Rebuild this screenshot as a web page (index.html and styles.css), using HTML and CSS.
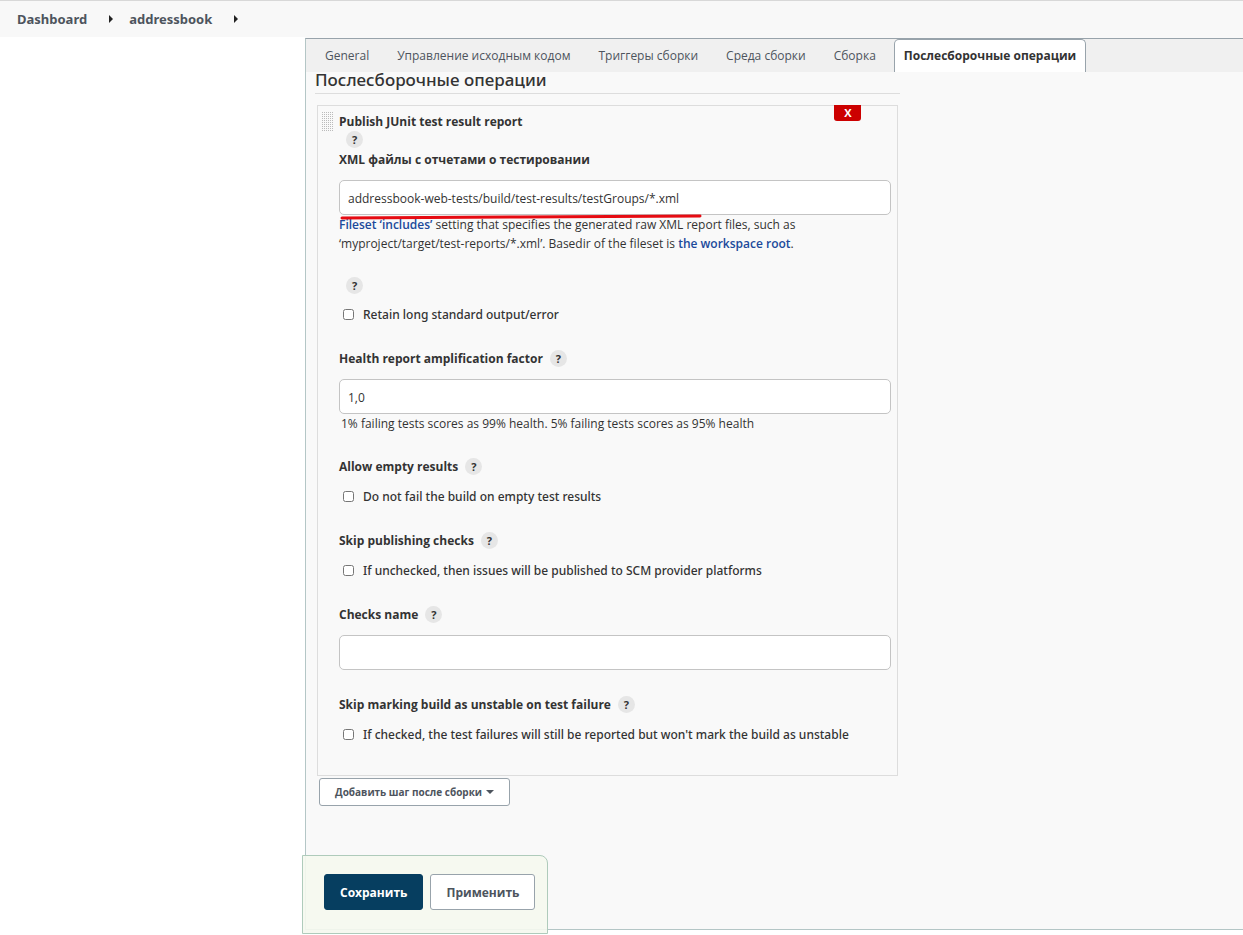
FILE: index.html
```html
<!DOCTYPE html>
<html lang="ru">
<head>
<meta charset="utf-8">
<title>addressbook</title>
<link rel="stylesheet" href="styles.css">
</head>
<body>
<nav class="breadcrumbs">
  <a href="#">Dashboard</a>
  <svg class="crumb-arrow" viewBox="0 0 4 8"><path d="M0 0L4 4L0 8Z"/></svg>
  <a href="#">addressbook</a>
  <svg class="crumb-arrow" viewBox="0 0 4 8"><path d="M0 0L4 4L0 8Z"/></svg>
</nav>
<div class="page">
  <aside class="side"></aside>
  <main class="panel">
    <nav class="tabs">
      <a class="tab" href="#">General</a>
      <a class="tab" href="#">Управление исходным кодом</a>
      <a class="tab" href="#">Триггеры сборки</a>
      <a class="tab" href="#">Среда сборки</a>
      <a class="tab" href="#">Сборка</a>
      <a class="tab active" href="#">Послесборочные операции</a>
    </nav>
    <form class="config">
      <h1 class="section-title">Послесборочные операции</h1>
      <section class="chunk">
        <button class="delete" type="button">X</button>
        <svg class="handle" viewBox="0 0 11 19"><defs><pattern id="dots" width="2" height="2" patternUnits="userSpaceOnUse"><rect width="1" height="1"/></pattern></defs><rect width="11" height="19" fill="url(#dots)"/></svg>
        <div class="fields">
          <div class="field">
            <h2 class="label">Publish JUnit test result report</h2>
            <div class="help-row"><button class="help" type="button">?</button></div>
            <label class="label" for="xml">XML файлы с отчетами о тестировании</label>
            <div class="marked">
              <input class="text" id="xml" type="text" value="addressbook-web-tests/build/test-results/testGroups/*.xml">
              <svg class="underline" viewBox="0 0 362 6"><path d="M2 4L180 3L360 2"/></svg>
            </div>
            <p class="note"><a href="#">Fileset ‘includes’</a> setting that specifies the generated raw XML report files, such as ‘myproject/target/test-reports/*.xml’. Basedir of the fileset is <a href="#">the workspace root</a>.</p>
          </div>
          <div class="field">
            <div class="help-row"><button class="help" type="button">?</button></div>
            <label class="check"><input type="checkbox">Retain long standard output/error</label>
          </div>
          <div class="field">
            <div class="label-row"><label class="label" for="health">Health report amplification factor</label><button class="help" type="button">?</button></div>
            <input class="text" id="health" type="text" value="1,0">
            <p class="note indent">1% failing tests scores as 99% health. 5% failing tests scores as 95% health</p>
          </div>
          <div class="field">
            <div class="label-row"><span class="label">Allow empty results</span><button class="help" type="button">?</button></div>
            <label class="check"><input type="checkbox">Do not fail the build on empty test results</label>
          </div>
          <div class="field">
            <div class="label-row"><span class="label">Skip publishing checks</span><button class="help" type="button">?</button></div>
            <label class="check"><input type="checkbox">If unchecked, then issues will be published to SCM provider platforms</label>
          </div>
          <div class="field">
            <div class="label-row"><label class="label" for="checks">Checks name</label><button class="help" type="button">?</button></div>
            <input class="text" id="checks" type="text">
          </div>
          <div class="field">
            <div class="label-row"><span class="label">Skip marking build as unstable on test failure</span><button class="help" type="button">?</button></div>
            <label class="check"><input type="checkbox">If checked, the test failures will still be reported but won't mark the build as unstable</label>
          </div>
        </div>
      </section>
      <button class="btn add" type="button">Добавить шаг после сборки<svg class="caret" viewBox="0 0 8 4"><path d="M0 0H8L4 4Z"/></svg></button>
    </form>
    <div class="save-bar">
      <button class="btn primary" type="button">Сохранить</button>
      <button class="btn" type="button">Применить</button>
    </div>
  </main>
</div>
</body>
</html>
```
FILE: styles.css
```css
* { box-sizing: border-box; }
body {
  margin: 0;
  background: #fff;
  color: #333;
  font: 12px/19px "Open Sans", "Noto Sans", sans-serif;
}
h1, h2, p { margin: 0; }
button, input { font: inherit; color: inherit; }
a { color: #204a9b; text-decoration: none; font-weight: 600; }

.breadcrumbs {
  display: flex;
  align-items: center;
  gap: 16px;
  height: 37px;
  padding: 0 17px;
  border-top: 1px solid #d8d8d8;
  background: #f8f8f8;
  font-family: "Noto Sans", "Open Sans", sans-serif;
  font-size: 13px;
}
.breadcrumbs a { color: #4d545d; font-weight: 700; }
.crumb-arrow { width: 4px; height: 8px; margin-left: 6px; fill: #222; }

.page { display: flex; align-items: stretch; background: linear-gradient(#f9f9f9, #f9f9f9) 305px 0 / 100% 1px no-repeat; }
.side { width: 305px; flex: none; }
.panel {
  position: relative;
  flex: 1;
  margin-top: 1px;
  margin-bottom: 5px;
  padding-bottom: 123px;
  border: solid #b4c6c6;
  border-width: 1px 0 1px 1px;
  border-top-color: #98a3ab;
  background: #f9f9f9;
}

.tabs { display: flex; gap: 8px; height: 33px; padding-left: 9px; background: #f0f0f0; }
.tab {
  padding: 6px 9px 0;
  border: 1px solid transparent;
  border-bottom: 0;
  color: #4d545d;
  font-weight: 400;
}
.tab.active {
  background: #fff;
  border-color: #98a3ab;
  border-radius: 5px 5px 0 0;
  color: #333;
  font-weight: 700;
}

.config { width: calc(63% - 5px); margin-left: 9px; }
.section-title {
  height: 22px;
  border-bottom: 1px solid #ddd;
  font-family: "Noto Sans", "Open Sans", sans-serif;
  font-size: 17px;
  line-height: 16px;
  font-weight: 500;
}
.chunk {
  position: relative;
  display: flex;
  gap: 6px;
  margin: 11px 2px 2px;
  padding: 6px 6px 31px 4px;
  border: 1px solid #ddd;
}
.delete {
  position: absolute;
  top: -1px;
  right: 36px;
  width: 27px;
  height: 16px;
  padding: 0;
  border: 0;
  border-radius: 0 0 3px 3px;
  background: #c00;
  color: #fff;
  font-weight: 700;
  font-size: 11px;
  line-height: 16px;
}
.handle { width: 11px; height: 19px; flex: none; fill: #bbb; }
.fields { display: flex; flex-direction: column; gap: 25px; flex: 1; }
.field { display: flex; flex-direction: column; }
.label { font-size: 12px; line-height: 19px; font-weight: 700; }
.label-row { display: flex; align-items: center; gap: 7px; margin-bottom: 11px; }
.help-row { display: flex; align-items: flex-start; height: 19px; padding-left: 7px; }
.help {
  width: 17px;
  height: 17px;
  padding: 0;
  border: 0;
  border-radius: 50%;
  background: #e6e6e6;
  font-weight: 700;
  font-size: 11px;
  line-height: 17px;
}
.help-row + .check { margin-top: 9px; }
.text {
  width: 100%;
  height: 35px;
  padding: 2px 8px 0;
  border: 1px solid #c4c4c4;
  border-radius: 5px;
  background: #fff;
}
.marked { position: relative; display: flex; margin-top: 11px; }
.underline {
  position: absolute;
  left: 1px;
  top: 34px;
  width: 362px;
  height: 6px;
  fill: none;
  stroke: #e60b12;
  stroke-width: 3;
  stroke-linecap: round;
}
.note { margin-bottom: -1px; }
.indent { padding-left: 2px; }
.check {
  display: flex;
  align-items: center;
  gap: 9px;
  padding-left: 4px;
  font-family: "Noto Sans", "Open Sans", sans-serif;
  font-weight: 500;
}
.check input { width: 11px; height: 11px; margin: 0; }

.btn {
  height: 36px;
  padding: 0 15px;
  border: 1px solid #98a3ab;
  border-radius: 3px;
  background: #fff;
  color: #4d545d;
  font-weight: 700;
}
.btn.primary { border-color: #063e60; background: #063e60; color: #fff; }
.btn.add { display: flex; align-items: center; gap: 4px; height: 28px; margin-left: 4px; font-size: 10px; }
.caret { width: 8px; height: 4px; fill: #4d545d; }
.save-bar {
  position: absolute;
  left: -4px;
  bottom: -5px;
  display: flex;
  gap: 7px;
  padding: 18px 12px 23px 21px;
  border: 1px solid #afcbbb;
  border-radius: 0 8px 0 0;
  background: rgba(245, 248, 238, 0.9);
}
```
